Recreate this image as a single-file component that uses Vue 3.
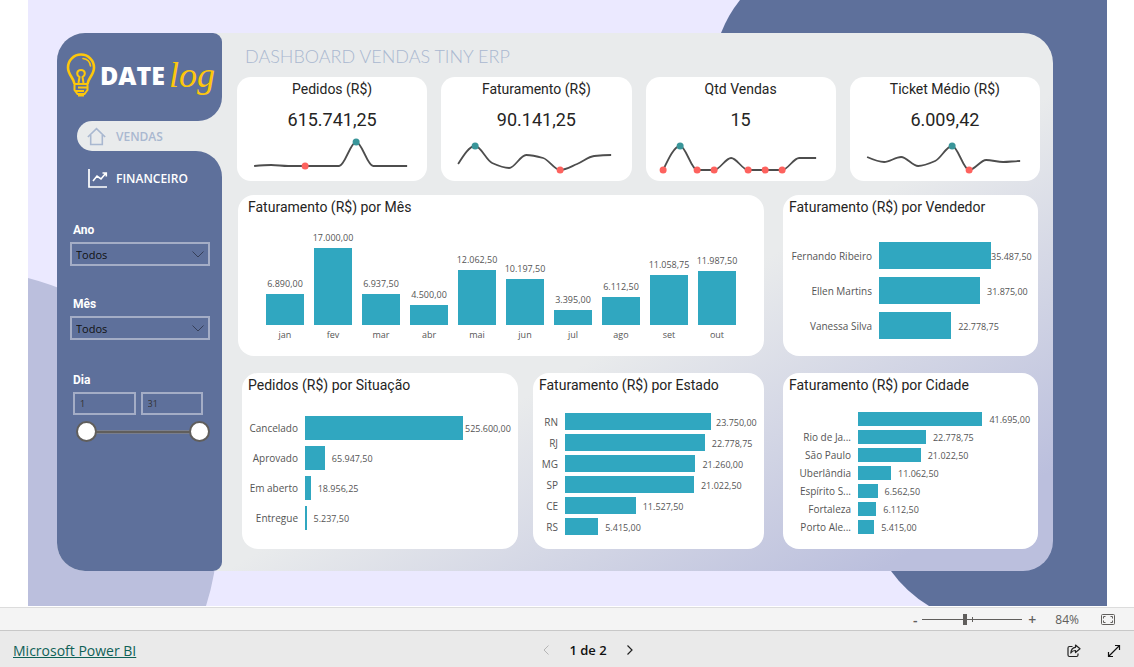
<script setup>
import { ref } from 'vue'

const year = ref('Todos')
const month = ref('Todos')
const dayFrom = ref(1)
const dayTo = ref(31)
const zoom = ref(84)

const kpis = [
  { title: 'Pedidos (R$)', value: '615.741,25', ys: [31, 30, 31, 31, 31, 31, 7, 31, 31, 31], high: [6], low: [3] },
  { title: 'Faturamento (R$)', value: '90.141,25', ys: [29, 11, 28, 33, 20, 23, 35, 29, 21, 20], high: [1], low: [6] },
  { title: 'Qtd Vendas', value: '15', ys: [35, 11, 35, 35, 23, 35, 35, 35, 23, 23], high: [1], low: [0, 2, 3, 5, 6, 7] },
  { title: 'Ticket Médio (R$)', value: '6.009,42', ys: [22, 27, 22, 31, 26, 11, 35, 25, 27, 26], high: [5], low: [6] }
]

const STEP = 17
const px = (i) => (i + 1) * STEP

// Smooth line whose control points never overshoot the data.
function smooth(ys) {
  const slopes = ys.map((y, i) => {
    if (i === 0 || i === ys.length - 1) return 0
    const a = (y - ys[i - 1]) / STEP
    const b = (ys[i + 1] - y) / STEP
    if (a * b <= 0) return 0
    return (2 * a * b) / (a + b)
  })
  slopes[0] = (1.5 * (ys[1] - ys[0])) / STEP - slopes[1] / 2
  let d = `M${px(0)} ${ys[0]}`
  for (let i = 1; i < ys.length; i++) {
    const h = STEP / 3
    d += ` C${px(i - 1) + h} ${ys[i - 1] + slopes[i - 1] * h} ${px(i) - h} ${ys[i] - slopes[i] * h} ${px(i)} ${ys[i]}`
  }
  return d
}

const fmt = (v) => v.toLocaleString('pt-BR', { minimumFractionDigits: 2 })

const months = [
  ['jan', 6890], ['fev', 17000], ['mar', 6937.5], ['abr', 4500], ['mai', 12062.5],
  ['jun', 10197.5], ['jul', 3395], ['ago', 6112.5], ['set', 11058.75], ['out', 11987.5]
]

const panels = [
  {
    key: 'vendedor', title: 'Faturamento (R$) por Vendedor', full: 73.5,
    rows: [['Fernando Ribeiro', 35487.5], ['Ellen Martins', 31875], ['Vanessa Silva', 22778.75]]
  },
  {
    key: 'situacao', title: 'Pedidos (R$) por Situação', full: 76.5,
    rows: [['Cancelado', 525600], ['Aprovado', 65947.5], ['Em aberto', 18956.25], ['Entregue', 5237.5]]
  },
  {
    key: 'estado', title: 'Faturamento (R$) por Estado', full: 75.5,
    rows: [['RN', 23750], ['RJ', 22778.75], ['MG', 21260], ['SP', 21022.5], ['CE', 11527.5], ['RS', 5415]]
  },
  {
    key: 'cidade', title: 'Faturamento (R$) por Cidade', full: 71.5,
    rows: [['', 41695], ['Rio de Ja...', 22778.75], ['São Paulo', 21022.5], ['Uberlândia', 11062.5], ['Espírito S...', 6562.5], ['Fortaleza', 6112.5], ['Porto Ale...', 5415]]
  }
]
const share = (p, v) => `${(p.full * v) / p.rows[0][1]}%`
</script>

<template>
  <div class="page">
    <div class="canvas">
      <svg class="backdrop" viewBox="0 0 1079 606" preserveAspectRatio="none" aria-hidden="true">
        <path d="M0 278 Q100 304 150 390 Q195 470 190 538 Q188 575 178 606 H0 Z" fill="#bbbfdd" />
        <path d="M712 0 Q700 15 693 33 L720 300 L863 571 Q878 592 901 606 H1079 V0 Z" fill="#5e709b" />
      </svg>

      <div class="shell">
        <aside class="side">
          <div class="brand">
            <svg class="bulb" viewBox="0 0 30 44" fill="none" stroke="#fdc70c" aria-hidden="true">
              <path d="M8.500 31 C8 25 2 22 2 14.500 A13 13 0 0 1 28 14.500 C28 22 22 25 21.500 31" stroke-width="2.600" />
              <path d="M12.500 30 L13.500 24 C10 22 10.500 17 15 17 C19.500 17 20 22 16.500 24 L17.500 30" stroke-width="2" />
              <path d="M17 5.500 C21.500 6 24 9 24.500 13" stroke-width="1.600" stroke-linecap="round" />
              <path d="M8.500 31 H21.500 V37 L18.500 41 H11.500 L8.500 37 Z" stroke-width="2" />
              <path d="M12 34.500 H21 M9 38 H18" stroke-width="2" />
              <path d="M12 42.500 H18" stroke-width="2" />
            </svg>
            <span class="date">DATE</span><span class="log">log</span>
          </div>
          <nav class="nav">
            <div class="tab-row">
              <a href="#vendas" class="tab active">
                <svg viewBox="0 0 18 18" fill="none" stroke="#a9b8d0" stroke-width="1.500" aria-hidden="true">
                  <path d="M.800 9.500 L9 1.500 L17.200 9.500 M3.500 7.500 V16.500 H14.500 V7.500" />
                </svg>
                VENDAS
              </a>
            </div>
          </nav>
          <div class="lower">
            <a href="#financeiro" class="tab">
              <svg viewBox="0 0 20 20" fill="none" stroke="#fff" stroke-width="1.700" aria-hidden="true">
                <path d="M1 1 V19 H19" />
                <path d="M5 13 L9 8 L13 11 L18 5 M14.500 5 H18.300 V8.500" stroke-width="1.600" />
              </svg>
              FINANCEIRO
            </a>

            <div class="filter">
              <label for="ano">Ano</label>
              <div class="select">
                <select id="ano" v-model="year"><option>Todos</option></select>
                <svg viewBox="0 0 12 7" fill="none" stroke="#363f59" aria-hidden="true"><path d="M.500 .500 L6 6 L11.500 .500" /></svg>
              </div>
            </div>
            <div class="filter">
              <label for="mes">Mês</label>
              <div class="select">
                <select id="mes" v-model="month"><option>Todos</option></select>
                <svg viewBox="0 0 12 7" fill="none" stroke="#363f59" aria-hidden="true"><path d="M.500 .500 L6 6 L11.500 .500" /></svg>
              </div>
            </div>
            <div class="filter">
              <label for="dia">Dia</label>
              <div class="days">
                <input id="dia" v-model="dayFrom" type="text" />
                <input v-model="dayTo" type="text" aria-label="Dia final" />
              </div>
              <div class="range">
                <input v-model="dayFrom" type="range" min="1" max="31" aria-label="Primeiro dia" />
                <input v-model="dayTo" type="range" min="1" max="31" aria-label="Último dia" />
              </div>
            </div>
          </div>
        </aside>

        <main class="main">
          <h1>DASHBOARD VENDAS TINY ERP</h1>

          <div class="kpis">
            <section v-for="k in kpis" :key="k.title" class="kpi">
              <h2>{{ k.title }}</h2>
              <p>{{ k.value }}</p>
              <svg viewBox="0 0 190 40" aria-hidden="true">
                <path :d="smooth(k.ys)" fill="none" stroke="#4d4d4d" stroke-width="1.800" />
                <circle v-for="i in k.low" :key="'l' + i" :cx="px(i)" :cy="k.ys[i]" r="3.500" fill="#fd625e" />
                <circle v-for="i in k.high" :key="'h' + i" :cx="px(i)" :cy="k.ys[i]" r="3.500" fill="#399599" />
              </svg>
            </section>
          </div>

          <div class="panels">
            <section class="panel mes">
              <h2>Faturamento (R$) por Mês</h2>
              <div class="columns">
                <div v-for="[name, v] in months" :key="name" class="column">
                  <span class="num">{{ fmt(v) }}</span>
                  <div class="stick" :style="{ '--ratio': v / 17000 }"></div>
                  <span class="name">{{ name }}</span>
                </div>
              </div>
            </section>

            <section v-for="p in panels" :key="p.key" class="panel" :class="p.key">
              <h2>{{ p.title }}</h2>
              <div class="bars">
                <div v-for="[name, v] in p.rows" :key="name" class="row">
                  <span class="name">{{ name }}</span>
                  <div class="track" :style="{ '--share': share(p, v) }">
                    <div class="bar"></div>
                    <span class="num">{{ fmt(v) }}</span>
                  </div>
                </div>
              </div>
            </section>
          </div>
        </main>
      </div>
    </div>

    <div class="zoombar">
      <button type="button" aria-label="Reduzir">-</button>
      <div class="zoomslider">
        <input v-model="zoom" type="range" min="0" max="200" aria-label="Zoom" />
      </div>
      <button type="button" aria-label="Ampliar">+</button>
      <span class="percent">84%</span>
      <button type="button" class="fit" aria-label="Ajustar à página">
        <svg width="14" height="11" viewBox="0 0 14 11" fill="none" stroke="#605e5c" aria-hidden="true">
          <rect x=".500" y=".500" width="13" height="10" rx="1" />
          <path d="M4.500 2.500 H2.500 V4.500 M9.500 2.500 H11.500 V4.500 M4.500 8.500 H2.500 V6.500 M9.500 8.500 H11.500 V6.500" />
        </svg>
      </button>
    </div>

    <footer class="footer">
      <a href="#powerbi">Microsoft Power BI</a>
      <div class="pager">
        <button type="button" disabled aria-label="Página anterior">
          <svg width="6" height="10" viewBox="0 0 6 10" fill="none" stroke="#b5b5b5" aria-hidden="true"><path d="M5.500 .500 L1 5 L5.500 9.500" /></svg>
        </button>
        <span>1 de 2</span>
        <button type="button" aria-label="Próxima página">
          <svg width="6" height="10" viewBox="0 0 6 10" fill="none" stroke="#222" stroke-width="1.200" aria-hidden="true"><path d="M.500 .500 L5 5 L.500 9.500" /></svg>
        </button>
      </div>
      <div class="actions">
        <button type="button" aria-label="Compartilhar">
          <svg width="14" height="14" viewBox="0 0 14 14" fill="none" stroke="#222" stroke-width="1.200" stroke-linejoin="round" aria-hidden="true">
            <path d="M5.500 2.500 H2.500 Q1 2.500 1 4 V11 Q1 12.500 2.500 12.500 H9.500 Q11 12.500 11 11 V9.500" />
            <path d="M8.500 1 L13 4.800 L8.500 8.500 V6.500 Q5.500 6.300 3.800 9 Q4.200 3.800 8.500 3.300 Z" />
          </svg>
        </button>
        <button type="button" aria-label="Tela inteira">
          <svg width="14" height="14" viewBox="0 0 14 14" fill="none" stroke="#111" stroke-width="1.200" aria-hidden="true">
            <path d="M1.500 12.500 L12.500 1.500 M8 1.500 H12.500 V6 M1.500 8 V12.500 H6" />
          </svg>
        </button>
      </div>
    </footer>
  </div>
</template>

<style>
body { margin: 0; background: #fff; }
</style>

<style scoped>
* { box-sizing: border-box; }
h1, h2, p { margin: 0; font-weight: 400; }
button { border: 0; padding: 0; background: none; color: inherit; font: inherit; display: inline-flex; align-items: center; justify-content: center; }

.page { min-height: 100vh; display: flex; flex-direction: column; font-family: "Open Sans", "Noto Sans", sans-serif; color: #252423; }
.canvas { position: relative; flex: 1; margin: 0 27px 1px 28px; background: #ebe9ff; padding: 33px 54px 34px 29px; }
.backdrop { position: absolute; inset: 0; width: 100%; height: 100%; }
.shell { position: relative; display: flex; min-height: 538px; border-radius: 28px 30px 30px 28px; background: linear-gradient(150deg, #e9ebec 57%, #bbbfdd 91%); }

.side { width: 165px; flex: none; display: flex; flex-direction: column; }
.brand { height: 88px; padding: 0 0 4px 8px; background: #5e709b; border-radius: 28px 9px 24px 0; display: flex; align-items: center; }
.bulb { width: 32px; height: 44px; }
.date { margin-left: 3px; font-size: 25px; font-weight: 800; color: #fff; line-height: 32px; }
.log { margin-left: 4px; font-family: "Liberation Serif", serif; font-style: italic; font-size: 36px; line-height: 40px; color: #fdc70c; }
.tab-row { padding-left: 20px; background: linear-gradient(90deg, #5e709b 40px, #e9ebec 40px); }
.tab { display: flex; align-items: center; height: 30px; font-size: 12px; font-weight: 600; color: #fff; text-decoration: none; }
.tab svg { width: 20px; height: 20px; margin-right: 8px; }
.tab.active { padding-left: 10px; border-radius: 15px 0 0 15px; background: #e9ebec; color: #a9b8d0; }
.tab.active svg { width: 19px; height: 19px; margin-right: 10px; }
.lower { flex: 1; padding: 12px 12px 24px 13px; background: #5e709b; border-radius: 0 26px 9px 28px; }
.lower .tab { padding-left: 18px; margin-bottom: 29px; }

.filter { margin-bottom: 30px; }
.filter label { display: block; margin: 0 0 4px 3px; font: 700 12px/16px Roboto, sans-serif; color: #fff; }
.select { display: grid; align-items: center; height: 24px; }
.select > * { grid-area: 1 / 1; }
.select select { appearance: none; width: 100%; height: 24px; padding: 0 4px; border: 2px solid #a4adc6; border-radius: 0; background: none; font: 11px "Open Sans", sans-serif; color: #111; }
.select svg { width: 12px; height: 7px; margin-right: 6px; justify-self: end; pointer-events: none; }
.filter:last-child { margin-top: 32px; }
.days { display: grid; grid-template-columns: 1fr 1fr; gap: 5px; padding: 0 7px 0 3px; }
.days input { width: 100%; min-width: 0; height: 23px; padding: 0 5px; border: 2px solid #a4adc6; border-radius: 0; background: none; font: 9px "Open Sans", sans-serif; color: #333; }
.range { display: grid; margin: 6px 0 0 6px; background: linear-gradient(#8b95b0, #605e5c 30%, #605e5c 70%, #8b95b0) center / calc(100% - 20px) 4px no-repeat; }
.range input { grid-area: 1 / 1; appearance: none; width: 100%; height: 21px; margin: 0; background: none; pointer-events: none; }
.range input::-webkit-slider-thumb { appearance: none; width: 21px; height: 21px; border: 2px solid #605e5c; border-radius: 50%; background: #fff; pointer-events: auto; }

.main { flex: 1; min-width: 0; padding: 11px 15px 22px 16px; }
h1 { padding-left: 7px; font: 300 18px/24px Lato, sans-serif; color: #a9b8d0; }
.kpis { display: grid; grid-template-columns: repeat(4, minmax(0, 1fr)); gap: 14px; margin: 9px -2px 0 -1px; }
.kpi { padding: 2px 0 6px; border-radius: 14px; background: #fff; text-align: center; }
.kpi h2 { font: 14px/20px Roboto, sans-serif; }
.kpi p { margin-top: 9px; font: 18px/24px Roboto, sans-serif; }
.kpi svg { display: block; width: 100%; height: 40px; margin-top: 3px; }

.panels { display: grid; grid-template-columns: minmax(0, 280fr) minmax(0, 231fr) minmax(0, 259fr); column-gap: 15px; row-gap: 17px; margin-top: 14px; }
.panel { min-width: 0; padding: 2px 6px 12px; border-radius: 16px; background: #fff; display: flex; flex-direction: column; }
.panel h2 { font: 14px/20px Roboto, sans-serif; white-space: nowrap; }
.mes { grid-column: 1 / 3; min-height: 161px; padding: 2px 23px 12px; }
.mes h2 { margin-left: -13px; }
.vendedor, .cidade { margin-left: 4px; }
.situacao { margin-left: 4px; }
.situacao, .estado, .cidade { min-height: 176px; }

.num, .name { font-size: 9px; line-height: 12px; color: #555; white-space: nowrap; }
.row .name { font-size: 10px; }
.columns { flex: 1; display: flex; align-items: flex-end; }
.column { flex: 1; min-width: 0; display: flex; flex-direction: column; align-items: center; }
.stick { width: 38px; height: calc(77px * var(--ratio)); margin: 4px 0; background: #30a7c0; }
.column .name { margin-bottom: 3px; }

.row { display: grid; grid-template-columns: var(--names) minmax(0, 1fr); column-gap: 7px; align-items: center; }
.row .name { text-align: right; }
.bars { display: flex; flex-direction: column; }
.track { display: grid; align-items: center; }
.track > * { grid-area: 1 / 1; }
.bar { width: var(--share); height: var(--thick); background: #30a7c0; }
.track .num { padding-top: 2px; margin-left: min(calc(var(--share) + 7px), calc(100% - var(--reserve))); }
.vendedor .bars { --names: 83px; --thick: 27px; --reserve: 41px; gap: 8px; margin-top: 25px; }
.situacao .bars { --names: 50px; --thick: 24px; --reserve: 47px; gap: 6px; margin-top: 21px; }
.estado .bars { --names: 19px; --thick: 17px; --reserve: 42px; gap: 4px; margin-top: 18px; }
.cidade .bars { --names: 62px; --thick: 14px; --reserve: 42px; gap: 4px; margin-top: 17px; }

.zoombar { height: 23px; padding-right: 19px; border-top: 1px solid #dcdcdc; background: #f4f4f4; display: flex; align-items: center; justify-content: flex-end; font-size: 12px; color: #605e5c; }
.zoombar button { width: 14px; height: 20px; font-size: 14px; font-weight: 600; }
.zoomslider { width: 100px; margin: 0 3px 0 0; background: linear-gradient(#605e5c, #605e5c) 50px center / 1px 5px no-repeat, linear-gradient(#605e5c, #605e5c) center / 100% 1px no-repeat; }
.zoomslider input { display: block; appearance: none; width: 100%; height: 12px; margin: 0; background: none; }
.zoomslider input::-webkit-slider-thumb { appearance: none; width: 4px; height: 11px; background: #605e5c; }
.percent { margin: 0 22px 0 16px; }

.footer { height: 37px; padding: 0 13px; border-top: 1px solid #c8c8c8; background: #eaeaea; display: grid; grid-template-columns: 1fr auto 1fr; align-items: center; }
.footer a { justify-self: start; padding-top: 3px; font-size: 14px; line-height: 20px; color: #0f6157; }
.pager { display: flex; align-items: center; gap: 10px; font-size: 13px; font-weight: 600; padding: 2px 0 0 42px; color: #111; }
.pager button { width: 26px; height: 20px; }
.actions { justify-self: end; display: flex; gap: 26px; padding: 3px 0 0; }
</style>
